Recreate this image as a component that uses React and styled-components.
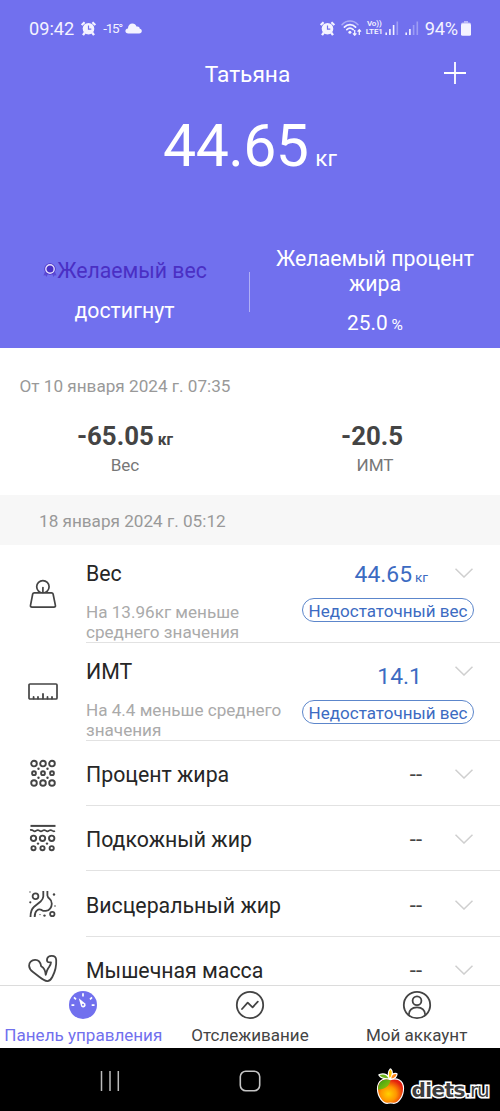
import React from "react";
import styled, { createGlobalStyle } from "styled-components";

const Global = createGlobalStyle`
  * { box-sizing: border-box; }
  body { margin: 0; background: #fff; font-family: Roboto, "Liberation Sans", sans-serif; }
`;

const Screen = styled.div`
  position: relative;
  width: 500px;
  height: 1111px;
  display: flex;
  flex-direction: column;
  overflow: hidden;
  background: #fff;
`;

const T = styled.span`
  display: block;
  font-size: ${(p) => p.$size}px;
  font-weight: ${(p) => p.$weight || 400};
  letter-spacing: ${(p) => p.$track || 0}px;
  color: ${(p) => p.$color || "inherit"};
  white-space: nowrap;
`;

const Unit = styled(T)`
  line-height: 1;
`;

/* ---------- header ---------- */
const Header = styled.header`
  flex: none;
  height: 348px;
  display: flex;
  flex-direction: column;
  background: #7170ee;
  color: #fff;
`;

const StatusBar = styled.div`
  height: 56px;
  display: flex;
  align-items: center;
  justify-content: space-between;
  padding: 0 29px 0 29px;
  color: #f4f3ff;
`;

const StatusGroup = styled.div`
  display: flex;
  align-items: center;
  gap: ${(p) => p.$gap || 0}px;
  svg { display: block; flex: none; }
`;

const Network = styled.div`
  display: flex;
  flex-direction: column;
  align-items: center;
  width: 19px;
  margin: 0 -5px 0 -3px;
  font-size: 8px;
  font-weight: 600;
  letter-spacing: -0.1px;
  white-space: nowrap;
  span { height: 8px; line-height: 8px; }
`;

const TitleBar = styled.div`
  height: 36px;
  display: grid;
  grid-template-columns: 1fr auto 1fr;
  align-items: center;
  padding: 0 33px 0 28px;
`;

const AddButton = styled.button`
  justify-self: end;
  display: block;
  padding: 0;
  margin-bottom: 3px;
  border: 0;
  background: none;
  color: inherit;
  svg { display: block; }
`;

const Hero = styled.div`
  height: 108px;
  display: flex;
  justify-content: center;
  align-items: baseline;
  gap: 7px;
  line-height: 108px;
`;

const Goals = styled.div`
  margin-top: 33px;
  height: 115px;
  display: grid;
  grid-template-columns: 249px 1px 250px;
  align-items: center;
`;

const Goal = styled.div`
  display: flex;
  flex-direction: column;
  align-items: center;
  gap: 14.5px;
  padding-top: 1px;
  line-height: 25.5px;
  text-align: center;
`;

const GoalName = styled.div`
  display: flex;
  align-items: center;
  svg { display: block; margin: -2px 0 0 1px; }
`;

const GoalValue = styled.div`
  display: flex;
  align-items: baseline;
  gap: 4px;
`;

const GoalTitle = styled.div`
  display: flex;
  flex-direction: column;
`;

const GoalDivider = styled.div`
  height: 40px;
  margin-top: 3px;
  background: #b0aff6;
`;

/* ---------- comparison ---------- */
const Content = styled.main`
  flex: none;
  height: 637px;
  overflow: hidden;
`;

const Compare = styled.section`
  height: 147px;
  padding-top: 26px;
`;

const CompareDate = styled.div`
  padding-left: 19.5px;
  line-height: 24px;
  color: #999;
`;

const CompareGrid = styled.div`
  display: grid;
  grid-template-columns: 1fr 1fr;
  margin-top: 20.5px;
`;

const Delta = styled.div`
  display: flex;
  flex-direction: column;
  align-items: center;
  color: #444;
`;

const DeltaValue = styled.div`
  display: flex;
  align-items: baseline;
  gap: 4px;
  height: 34px;
  padding-right: ${(p) => p.$right || 0}px;
  line-height: 34px;
`;

const DeltaLabel = styled.div`
  line-height: 24px;
  color: #777;
`;

const DateBar = styled.div`
  height: 50px;
  line-height: 52px;
  padding-left: 39px;
  background: #f7f7f7;
  color: #999;
`;

/* ---------- metric rows ---------- */
const Row = styled.div`
  display: grid;
  grid-template-columns: 86px 1fr;
  grid-template-rows: minmax(0, 1fr);
  height: ${(p) => p.$height}px;
`;

const RowIcon = styled.div`
  display: flex;
  align-items: center;
  justify-content: center;
  padding-bottom: 1px;
  svg { display: block; overflow: visible; }
`;

const RowBody = styled.div`
  display: flex;
  justify-content: space-between;
  align-items: ${(p) => (p.$tall ? "flex-start" : "center")};
  padding-right: 26px;
  border-bottom: 1.5px solid #e2e2e2;
`;

const RowText = styled.div`
  padding-top: ${(p) => (p.$tall ? 15 : 4.5)}px;
  line-height: 28px;
  color: #262626;
`;

const Note = styled.div`
  display: flex;
  flex-direction: column;
  margin-top: 14px;
  line-height: 20px;
  color: #aaa;
`;

const Reading = styled.div`
  display: flex;
  flex-direction: column;
  align-items: flex-end;
`;

const ReadingLine = styled.div`
  display: flex;
  align-items: flex-start;
  height: ${(p) => (p.$top || 1.5) + 30}px;
  padding-right: 1px;
  svg { display: block; margin-top: ${(p) => (p.$top ? 23 : 12)}px; }
`;

const Value = styled.div`
  display: flex;
  align-items: baseline;
  gap: 3px;
  padding-top: ${(p) => p.$top}px;
  margin-right: ${(p) => p.$right}px;
  line-height: 30px;
  color: ${(p) => (p.$empty ? "#444" : "#3c6bc2")};
`;

const Pill = styled.div`
  width: 172px;
  height: 24px;
  margin-top: 8px;
  display: flex;
  align-items: center;
  justify-content: center;
  border: 1.3px solid #5c86cb;
  border-radius: 12px;
  line-height: 22px;
  color: #3c6bc2;
  padding-top: 2px;
`;

/* ---------- bottom bars ---------- */
const Tabs = styled.nav`
  flex: none;
  height: 63px;
  display: grid;
  grid-template-columns: repeat(3, 1fr);
  border-top: 1px solid #dcdcdc;
  background: #fff;
`;

const Tab = styled.div`
  display: flex;
  flex-direction: column;
  align-items: center;
  padding-top: 4px;
  line-height: 24px;
  color: ${(p) => (p.$active ? "#7170ee" : "#444")};
  svg { display: block; margin-bottom: 3px; }
`;

const SystemNav = styled.div`
  flex: 1;
  display: grid;
  grid-template-columns: 219px 61px 1fr;
  align-items: center;
  justify-items: center;
  padding-top: 2px;
  background: #000;
  svg { display: block; }
`;

const Watermark = styled.div`
  position: absolute;
  left: 375px;
  top: 1068px;
  display: flex;
  align-items: flex-start;
  svg { display: block; }
`;

const Brand = styled.div`
  display: flex;
  align-items: baseline;
  margin: 9px 0 0 5.5px;
  font-family: "DejaVu Sans", sans-serif;
  line-height: 26px;
  color: #3d3d3d;
  -webkit-text-stroke: 3.2px #fff;
  paint-order: stroke fill;
`;

/* ---------- icons ---------- */
const Alarm = () => (
  <svg width="15" height="15" viewBox="0 0 15 15" fill="none" stroke="currentColor">
    <circle cx="7.5" cy="7.7" r="5.8" fill="currentColor" stroke="none" />
    <path d="M.7 4.1 3.6 1.2M14.3 4.1 11.4 1.2" strokeWidth="2.1" />
    <path d="M3.9 11.5 2 14.2M11.1 11.5 13 14.2" strokeWidth="2.3" />
    <path d="M7.5 4.5V8.2H10.3" stroke="#7170ee" strokeWidth="1.2" />
  </svg>
);

const Cloud = () => (
  <svg width="17" height="11" viewBox="0 0 17 11" fill="currentColor">
    <path d="M3.3 10.5C1.5 10.5.4 9.400.4 8c0-1.500 1.100-2.500 2.500-2.600C3.200 2.500 5 .6 7.400.6c2 0 3.500 1.200 4.100 3 .3-.1.600-.1.900-.1 1.400 0 2.200.9 2.400 2.200 1.300.2 2 1.100 2 2.300 0 1.500-1.100 2.500-2.600 2.500Z" />
  </svg>
);

const Wifi = () => (
  <svg width="21" height="16" viewBox="0 0 21 16" fill="none" stroke="currentColor" strokeLinecap="round">
    <path d="M1 4.7C5.4-.1 12.6-.1 17 4.7" strokeWidth="1.5" opacity=".45" />
    <path d="M3.4 7.2C6.7 3.8 11.3 3.8 14.6 7.2" strokeWidth="1.7" />
    <path d="M5.8 9.7C7.7 7.8 10.3 7.8 12.2 9.7" strokeWidth="1.7" />
    <circle cx="8.9" cy="12.3" r="1.5" fill="currentColor" stroke="none" />
    <path d="M13.7 10v5M12 13.4l1.7 1.8 1.7-1.8M18.3 15v-5M16.6 11.6l1.7-1.8 1.7 1.8" strokeWidth="1.3" strokeLinecap="butt" />
  </svg>
);

const Signal = ({ level }) => (
  <svg width="14" height="14" viewBox="0 0 14 14" fill="currentColor">
    {[2.5, 6, 10, 13.5].map((h, i) => (
      <rect key={h} x={0.4 + i * 3.7} y={14 - h} width="1.6" height={h} opacity={i < level ? 1 : 0.35} />
    ))}
  </svg>
);

const Battery = () => (
  <svg width="10" height="15" viewBox="0 0 10 15" fill="currentColor">
    <path d="M3 0h4v2H3zM1.500 1.500h7q1.500 0 1.500 1.500H0q0-1.500 1.500-1.500z" opacity=".55" />
    <rect y="2.5" width="10" height="12.3" rx="1.5" />
  </svg>
);

const Plus = () => (
  <svg width="24" height="24" viewBox="0 0 24 24" stroke="currentColor" strokeWidth="1.8">
    <path d="M12 1v22M1 12h22" />
  </svg>
);

const Medal = () => (
  <svg width="14" height="16" viewBox="0 0 14 16">
    <path d="M2.5 8.5.4 13.5l2-.3 1 1.7 1.8-3.500M11.500 8.500l2.100 5-2-.3-1 1.700-1.800-3.500" fill="#5b4ad4" />
    <circle cx="7" cy="7" r="5.700" fill="#4a2fc4" />
    <circle cx="7" cy="7" r="4.200" fill="none" stroke="#e4e0ff" strokeWidth="1.400" />
  </svg>
);

const Chevron = () => (
  <svg width="18" height="10" viewBox="0 0 18 10" fill="none" stroke="#cfcfcf" strokeWidth="1.5">
    <path d="M.5.7 9 9 17.5.7" />
  </svg>
);

const line = { fill: "none", stroke: "#444", strokeWidth: 1.7, strokeLinecap: "round", strokeLinejoin: "round" };

const WeightIcon = () => (
  <svg width="28" height="28" viewBox="0 0 28 28" {...line}>
    <circle cx="13.9" cy="6.8" r="6.2" />
    <path d="M5.2 12.8H22.6q1.200 0 1.500 1.200L26.400 25.300q.3 1.800-1.500 1.800H3q-1.800 0-1.500-1.800L3.700 14q.3-1.200 1.500-1.200Z" fill="#fff" />
    <path d="M13.9 7.5V12.400" />
  </svg>
);

const RulerIcon = () => (
  <svg width="30" height="17" viewBox="0 0 30 17" {...line}>
    <rect x="1" y="1" width="28" height="15" rx="1" />
    <path d="M5.6 14v1.500M10 14v1.500M15 11v4.500M19.500 14v1.500M24 14v1.500" strokeWidth="1.8" />
  </svg>
);

const FatIcon = () => (
  <svg width="28" height="28" viewBox="0 0 28 28" fill="none" stroke="#444" strokeWidth="1.9">
    {[5, 14, 23].map((x) => (
      <React.Fragment key={x}>
        <circle cx={x} cy="4.6" r="2.8" />
        <circle cx={x} cy="14.2" r="1.9" />
        <circle cx={x} cy="24" r="2.8" />
      </React.Fragment>
    ))}
    {[9.5, 18.5].map((x) => (
      <g key={x} fill="#444" stroke="none">
        <circle cx={x} cy="9.7" r="1.2" />
        <circle cx={x} cy="18.8" r="1.2" />
      </g>
    ))}
  </svg>
);

const SkinFatIcon = () => (
  <svg width="28" height="28" viewBox="0 0 28 28" fill="none" stroke="#444" strokeWidth="1.9">
    <path d="M1.5 1.9H26.5" strokeWidth="2" />
    <path d="M1 6q2.200-.2 3.200.7 1.500 1.300 3 0 1.600-1.300 3.200 0 1.600 1.300 3.200 0 1.600-1.300 3.200 0 1.600 1.300 3.200 0 1.600-1.300 3.200 0 1.300 1 2.800.3" strokeWidth="1.7" />
    {[4.5, 13.5, 22.7].map((x) => (
      <React.Fragment key={x}>
        <circle cx={x} cy="14.3" r="2.7" />
        <circle cx={x} cy="24.2" r="2.1" />
      </React.Fragment>
    ))}
    {[9, 18].map((x) => (
      <circle key={x} cx={x} cy="19.6" r="1.2" fill="#444" stroke="none" />
    ))}
  </svg>
);

const VisceralIcon = () => (
  <svg width="28" height="28" viewBox="0 0 28 28" {...line} strokeWidth="1.8" strokeLinecap="butt">
    <circle cx="6.5" cy="6.2" r="2.9" />
    <circle cx="23.3" cy="24" r="2.2" />
    <path d="M14.3 1V6.500q-.2 2.800-2.700 5L5.100 16.800Q1.400 20 1.500 27" />
    <path d="M18.4 1V5.500q.2 1.800 2.100 3.200 2.300 1.700 2.300 5-.3 6.300-6 7.200-2.400.2-4.300-1-2.600-1.200-4.500.5Q5.600 22.300 5.700 27" />
    <g fill="#444" stroke="none">
      <circle cx="1" cy="2" r=".7" />
      <circle cx="25" cy="4.5" r="1.2" />
      <circle cx="1.3" cy="12.3" r="1.1" />
      <circle cx="26" cy="16" r=".8" />
      <circle cx="15.5" cy="25.6" r="1.2" />
      <circle cx="11" cy="24.6" r=".7" />
    </g>
  </svg>
);

const MuscleIcon = () => (
  <svg width="30" height="28" viewBox="0 0 30 28" {...line} strokeWidth="1.8">
    <path d="M17.7 19.8C17.5 16 17 13.5 13.2 11.3 12.5 7 10 4.8 7 4.900 3.500 5 1 7.500 1.100 10.700 1.200 13.500 2.600 15.200 5 17L11.500 22C14 24 16.500 25.800 19.300 26.100 21.500 26.200 22.800 24.800 24.300 22 27.500 16 28.500 10 28.200 5 28 1.800 26 .8 23.500.9 20.500 1 19.700 1.800 19.200 3.600 18.700 5.500 18.900 6.700 20.200 7.100L23 7.300C23 10 21.500 11.500 20.300 13.100 19.200 14.800 18.600 17 17.700 19.800Z" />
  </svg>
);

const GaugeIcon = () => (
  <svg width="30" height="30" viewBox="0 0 30 30">
    <circle cx="15" cy="15" r="14" fill="#7170ee" />
    <path d="M15 3.3v3.200M3.500 15.200h2.800M23.700 15.200h2.800M6 7.300l2 2M24 7.300l-2 2" stroke="#fff" strokeWidth="1.7" />
    <path d="M10.8 8.3 17.2 13.4Q18.300 15.300 17 16.700 15 18.200 13.200 16.500Z" fill="#fff" />
    <circle cx="15" cy="14.8" r="1" fill="#7170ee" />
  </svg>
);

const TrendIcon = () => (
  <svg width="30" height="30" viewBox="0 0 30 30" {...line} strokeWidth="1.8">
    <circle cx="15" cy="15" r="13.2" />
    <path d="M7 19 12.7 12.7 17.6 17.3 22.8 11.7" />
  </svg>
);

const AccountIcon = () => (
  <svg width="30" height="30" viewBox="0 0 30 30" {...line} strokeWidth="1.8">
    <circle cx="15" cy="15" r="13.2" />
    <circle cx="15" cy="10.7" r="4.4" />
    <path d="M6.7 25Q7.2 17.3 15 17.300T23.300 25" />
  </svg>
);

const Recents = () => (
  <svg width="20" height="20" viewBox="0 0 20 20" stroke="#bcbcbc" strokeWidth="1.5">
    <path d="M1.5 0v20M10 0v20M18.3 0v20" />
  </svg>
);

const Home = () => (
  <svg width="22" height="22" viewBox="0 0 22 22" fill="none" stroke="#c4c4c4" strokeWidth="1.6">
    <rect x="1.3" y="1.3" width="19.4" height="19.4" rx="5.5" />
  </svg>
);

const Apple = () => (
  <svg width="31" height="38" viewBox="0 0 31 38">
    <defs>
      <radialGradient id="appleSkin" cx=".42" cy=".62" r=".62">
        <stop offset="0" stopColor="#ffd000" />
        <stop offset=".5" stopColor="#ff9600" />
        <stop offset="1" stopColor="#e3200f" />
      </radialGradient>
      <linearGradient id="appleGreen" x1="0" y1="0" x2="1" y2="1">
        <stop offset="0" stopColor="#2f9d1c" />
        <stop offset="1" stopColor="#a5c800" />
      </linearGradient>
    </defs>
    <g stroke="#fff" strokeWidth="2.2" strokeLinejoin="round" fill="#fff">
      <path d="M15.5 12.3C9 9.8 3 13 3 21 3.2 29 8.500 35 12.500 34.800q3-.7 6 0C23 35 28 28.500 28 20.500 28 12.500 21.500 9.800 15.500 12.300Z" />
      <path d="M14.8 10Q12.500 5 15.500 1.500 18.500 5 14.800 10ZM13.500 10.300Q7 10.500 4.500 7 11 5 13.500 10.300ZM16.300 10.500Q16.500 5.500 21.500 6 21 9.800 16.300 10.500Z" />
    </g>
    <path d="M15.5 12.3C9 9.8 3 13 3 21 3.2 29 8.500 35 12.500 34.800q3-.7 6 0C23 35 28 28.500 28 20.500 28 12.500 21.500 9.800 15.500 12.300Z" fill="url(#appleSkin)" />
    <path d="M15.5 12.3C9 9.8 3 13 3 21.500 9 22 14.500 18.500 15.500 12.300Z" fill="url(#appleGreen)" />
    <path d="M14.8 10Q12.500 5 15.500 1.500 18.500 5 14.800 10Z" fill="#ffc400" />
    <path d="M13.5 10.300Q7 10.500 4.500 7 11 5 13.500 10.300Z" fill="#6fb51a" />
    <path d="M16.300 10.500Q16.500 5.500 21.500 6 21 9.800 16.300 10.500Z" fill="#ff8a1c" />
  </svg>
);

/* ---------- data ---------- */
const metrics = [
  {
    name: "Вес", icon: WeightIcon, height: 98, value: "44.65", unit: "кг", top: 15, right: 27,
    note: ["На 13.96кг меньше", "среднего значения"], status: "Недостаточный вес",
  },
  {
    name: "ИМТ", icon: RulerIcon, height: 98, value: "14.1", top: 19, right: 33,
    note: ["На 4.4 меньше среднего", "значения"], status: "Недостаточный вес",
  },
  { name: "Процент жира", icon: FatIcon, height: 65 },
  { name: "Подкожный жир", icon: SkinFatIcon, height: 65 },
  { name: "Висцеральный жир", icon: VisceralIcon, height: 66 },
  { name: "Мышечная масса", icon: MuscleIcon, height: 65 },
];

const Metric = ({ name, icon: Icon, height, value, unit, top, right = 33, note, status }) => (
  <Row $height={height}>
    <RowIcon><Icon /></RowIcon>
    <RowBody $tall={!!note}>
      <RowText $tall={!!note}>
        <T $size={21.3}>{name}</T>
        {note && (
          <Note>
            {note.map((n) => <T key={n} $size={17.1}>{n}</T>)}
          </Note>
        )}
      </RowText>
      <Reading>
        <ReadingLine $top={top}>
          <Value $top={top || 3} $right={right} $empty={!value}>
            <T $size={value ? 22.9 : 22}>{value || "--"}</T>
            {unit && <Unit $size={13.5}>{unit}</Unit>}
          </Value>
          <Chevron />
        </ReadingLine>
        {status && <Pill><T $size={17.05}>{status}</T></Pill>}
      </Reading>
    </RowBody>
  </Row>
);

export default function App() {
  return (
    <Screen>
      <Global />
      <Header>
        <StatusBar>
          <StatusGroup $gap={7}>
            <T $size={18.2}>09:42</T>
            <Alarm />
            <StatusGroup $gap={3}>
              <T $size={13.4} $track={-1.3}>-15°</T>
              <Cloud />
            </StatusGroup>
          </StatusGroup>
          <StatusGroup $gap={6}>
            <Alarm />
            <Wifi />
            <Network><span>Vo))</span><span>LTE1</span></Network>
            <Signal level={3} />
            <Signal level={2} />
            <StatusGroup $gap={3}>
              <T $size={18.2} $track={-0.2}>94%</T>
              <Battery />
            </StatusGroup>
          </StatusGroup>
        </StatusBar>
        <TitleBar>
          <span />
          <T $size={22.7}>Татьяна</T>
          <AddButton aria-label="Добавить"><Plus /></AddButton>
        </TitleBar>
        <Hero>
          <T $size={59} $track={-0.6}>44.65</T>
          <Unit $size={22.5}>кг</Unit>
        </Hero>
        <Goals>
          <Goal>
            <GoalName>
              <Medal />
              <T $size={21.25} $color="#4a2fc4">Желаемый вес</T>
            </GoalName>
            <T $size={21.25}>достигнут</T>
          </Goal>
          <GoalDivider />
          <Goal>
            <GoalTitle>
              <T $size={21.25}>Желаемый процент</T>
              <T $size={21.25}>жира</T>
            </GoalTitle>
            <GoalValue>
              <T $size={20.8}>25.0</T>
              <Unit $size={15.5}>%</Unit>
            </GoalValue>
          </Goal>
        </Goals>
      </Header>
      <Content>
        <Compare>
          <CompareDate><T $size={17.15}>От 10 января 2024 г. 07:35</T></CompareDate>
          <CompareGrid>
            <Delta>
              <DeltaValue>
                <T $size={25.8} $weight={700}>-65.05</T>
                <Unit $size={15.6} $weight={700}>кг</Unit>
              </DeltaValue>
              <DeltaLabel><T $size={17.1}>Вес</T></DeltaLabel>
            </Delta>
            <Delta>
              <DeltaValue $right={6}><T $size={25.8} $weight={700}>-20.5</T></DeltaValue>
              <DeltaLabel><T $size={17.1}>ИМТ</T></DeltaLabel>
            </Delta>
          </CompareGrid>
        </Compare>
        <DateBar><T $size={17.15}>18 января 2024 г. 05:12</T></DateBar>
        {metrics.map((m) => <Metric key={m.name} {...m} />)}
      </Content>
      <Tabs>
        <Tab $active><GaugeIcon /><T $size={17.05}>Панель управления</T></Tab>
        <Tab><TrendIcon /><T $size={17}>Отслеживание</T></Tab>
        <Tab><AccountIcon /><T $size={17}>Мой аккаунт</T></Tab>
      </Tabs>
      <SystemNav>
        <Recents />
        <Home />
      </SystemNav>
      <Watermark>
        <Apple />
        <Brand><T $size={20} $weight={700} $track={-0.6}>diets</T><T $size={20} $track={-1.1}>.ru</T></Brand>
      </Watermark>
    </Screen>
  );
}
